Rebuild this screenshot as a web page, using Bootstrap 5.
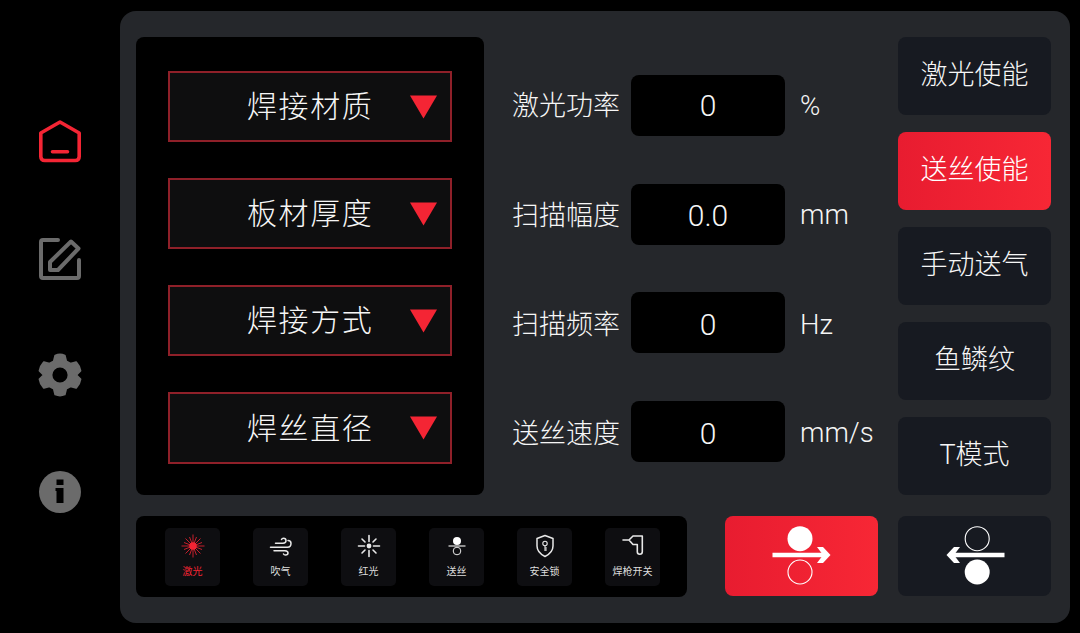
<!DOCTYPE html>
<html lang="zh-CN">
<head>
  <meta charset="UTF-8" />
  <meta name="viewport" content="width=device-width, initial-scale=1.0"/>
  <title>焊接控制面板</title>
  <link href="https://cdn.jsdelivr.net/npm/bootstrap@5.3.3/dist/css/bootstrap.min.css" rel="stylesheet"/>
  <style>
    html, body { height: 100%; }
    body {
      background: #000;
      color: #f6f6f6;
      font-family: Roboto, "Noto Sans CJK SC", sans-serif;
      font-weight: 300;
      overflow: hidden;
    }
    .screen { width: 1080px; height: 633px; padding: 11px 10px 10px 0; }
    .side-rail { width: 120px; padding-top: 109px; gap: 72.7px; }
    .side-rail svg { display: block; width: 44px; height: 44px; }
    .main-panel {
      width: 950px; height: 612px;
      background: #25272b;
      border-radius: 16px;
      padding: 26px 19px 26px 16px;
      gap: 21px;
    }
    .top-area { height: 458px; }
    .select-panel {
      width: 348px;
      background: #000;
      border-radius: 8px;
      padding: 34px 32px 0;
      gap: 36px;
    }
    .select-box {
      height: 71px;
      background: #0e0e0f;
      border: 2px solid #8f2029;
      font-size: 30px;
      letter-spacing: 1.6px;
      padding-left: 77px;
      padding-right: 12px;
    }
    .select-box:last-child { height: 72px; }
    .tri { width: 29px; height: 26px; fill: #f42534; }
    .param-col { width: 360px; margin-left: 28px; padding-top: 38px; gap: 47.5px; }
    .param-label { width: 119px; font-size: 27px; }
    .param-value {
      width: 154px; height: 61px;
      background: #000;
      border-radius: 8px;
      font-size: 30px;
    }
    .param-unit { margin-left: 15px; font-size: 27.5px; white-space: nowrap; }
    .param-col .param-label { margin-top: 2px; }
    .param-col > :nth-child(2) > span { padding-top: 2px; }
    .param-col > :nth-child(3) > span { padding-top: 4px; }
    .param-col > :nth-child(4) > span { padding-top: 4px; }
    .mode-col { width: 153px; margin-left: 26px; gap: 17px; }
    .mode-btn {
      height: 78px;
      background: #171a21;
      border-radius: 8px;
      font-size: 27px;
      padding-bottom: 2px;
    }
    .bottom-area { height: 81px; }
    .status-bar {
      width: 551px;
      background: #000;
      border-radius: 8px;
      padding: 12px 0 0 29px;
      gap: 33px;
    }
    .status-tile {
      width: 55px; height: 58px;
      background: #0e0e11;
      border-radius: 5px;
      font-size: 10px;
      font-weight: 400;
      line-height: 1;
      padding-top: 5px;
      color: #dedede;
    }
    .status-tile svg { width: 26px; height: 26px; margin-bottom: 8px; }
    .status-tile.is-red { color: #f42534; }
    .roll-btn { width: 153px; height: 80px; background: #171a21; border-radius: 8px; }
    .roll-btn svg { width: 64px; height: 64px; }
    .roll-gap { margin-left: 38px; margin-right: 20px; }
    .is-on { background: linear-gradient(90deg, #e81c30, #f72735); color: #fff; }
  </style>
</head>
<body>
  <div class="screen d-flex">
    <div class="side-rail d-flex flex-column align-items-center">
      <svg viewBox="0 0 44 44" fill="none" stroke="#f42534" stroke-width="3.600" stroke-linejoin="round" stroke-linecap="round">
        <path d="M22 2 L41.200 13 V36.500 Q41.200 40.500 37.200 40.500 H6.800 Q2.800 40.500 2.800 36.500 V13 Z"/>
        <path d="M14.500 31.700 H29.500"/>
      </svg>
      <svg viewBox="0 0 44 44" fill="none" stroke="#6b6b6b" stroke-width="4" stroke-linejoin="round" stroke-linecap="round">
        <path d="M20 3 H5 Q3 3 3 5 V39 Q3 41 5 41 H39 Q41 41 41 39 V23"/>
        <path d="M12 33 V25 L33 4.500 L40.500 11.500 L20 33 Z"/>
      </svg>
      <svg viewBox="0 0 44 44">
        <g transform="translate(22 22) scale(.95) translate(-22 -22)">
          <path fill="#6b6b6b" stroke="#6b6b6b" stroke-width="2" stroke-linejoin="round" fill-rule="evenodd" d="M17 1.500 Q22 -.5 27 1.500 L28.500 7.500 L33 10 L39 8.500 Q43 13 43.500 17.500 L39 22 L43.500 26.500 Q43 31 39 35.500 L33 34 L28.500 36.500 L27 42.500 Q22 44.500 17 42.500 L15.500 36.500 L11 34 L5 35.500 Q1 31 .5 26.500 L5 22 L.5 17.500 Q1 13 5 8.500 L11 10 L15.500 7.500 Z M22 13 A9 9 0 1 0 22 31 A9 9 0 1 0 22 13 Z"/>
        </g>
      </svg>
      <svg viewBox="0 0 44 44">
        <circle cx="22" cy="22" r="21" fill="#6b6b6b"/>
        <rect x="18.500" y="9.500" width="7" height="5.500" fill="#000"/>
        <path d="M17.500 18 H25.500 V33 H18.500 V21 H17.500 Z" fill="#000"/>
      </svg>
    </div>

    <div class="main-panel d-flex flex-column">
      <div class="top-area d-flex">
        <div class="select-panel d-flex flex-column">
          <div class="select-box d-flex align-items-center justify-content-between"><span>焊接材质</span><svg class="tri" viewBox="0 0 30 26"><path d="M1 1 H29 L15 25 Z"/></svg></div>
          <div class="select-box d-flex align-items-center justify-content-between"><span>板材厚度</span><svg class="tri" viewBox="0 0 30 26"><path d="M1 1 H29 L15 25 Z"/></svg></div>
          <div class="select-box d-flex align-items-center justify-content-between"><span>焊接方式</span><svg class="tri" viewBox="0 0 30 26"><path d="M1 1 H29 L15 25 Z"/></svg></div>
          <div class="select-box d-flex align-items-center justify-content-between"><span>焊丝直径</span><svg class="tri" viewBox="0 0 30 26"><path d="M1 1 H29 L15 25 Z"/></svg></div>
        </div>

        <div class="param-col d-flex flex-column">
          <div class="d-flex align-items-center"><span class="param-label flex-shrink-0">激光功率</span><span class="param-value flex-shrink-0 d-flex align-items-center justify-content-center">0</span><span class="param-unit">%</span></div>
          <div class="d-flex align-items-center"><span class="param-label flex-shrink-0">扫描幅度</span><span class="param-value flex-shrink-0 d-flex align-items-center justify-content-center">0.0</span><span class="param-unit">mm</span></div>
          <div class="d-flex align-items-center"><span class="param-label flex-shrink-0">扫描频率</span><span class="param-value flex-shrink-0 d-flex align-items-center justify-content-center">0</span><span class="param-unit">Hz</span></div>
          <div class="d-flex align-items-center"><span class="param-label flex-shrink-0">送丝速度</span><span class="param-value flex-shrink-0 d-flex align-items-center justify-content-center">0</span><span class="param-unit">mm/s</span></div>
        </div>

        <div class="mode-col d-flex flex-column">
          <div class="mode-btn d-flex align-items-center justify-content-center">激光使能</div>
          <div class="mode-btn is-on d-flex align-items-center justify-content-center">送丝使能</div>
          <div class="mode-btn d-flex align-items-center justify-content-center">手动送气</div>
          <div class="mode-btn d-flex align-items-center justify-content-center">鱼鳞纹</div>
          <div class="mode-btn d-flex align-items-center justify-content-center">T模式</div>
        </div>
      </div>

      <div class="bottom-area d-flex">
        <div class="status-bar d-flex">
          <div class="status-tile is-red d-flex flex-column align-items-center">
            <svg viewBox="0 0 26 26" stroke="#f42534" stroke-width=".8" fill="#f42534">
              <circle cx="13" cy="13" r="3.800" stroke="none"/>
              <path d="M13 1.500 V24.500 M1.500 13 H24.500 M5.500 5.500 L20.500 20.500 M20.500 5.500 L5.500 20.500 M9.500 4 L16.500 22 M16.500 4 L9.500 22 M4 9.500 L22 16.500 M4 16.500 L22 9.500"/>
            </svg>
            激光
          </div>
          <div class="status-tile d-flex flex-column align-items-center">
            <svg viewBox="0 0 26 26" fill="none" stroke="#e8e8e8" stroke-width="1.500" stroke-linecap="round">
              <path d="M7.500 10.300 H15 Q18 10 18 7.800 Q18 5.300 15.500 5.300 Q14 5.300 13.500 6.500"/>
              <path d="M2.500 14.300 H19.500 Q23 14 23 10.500 Q23 7.500 20 7.500"/>
              <path d="M6 17.700 H17 Q20 18 20 20 Q20 22 17.500 22 Q16 22 15.500 21"/>
            </svg>
            吹气
          </div>
          <div class="status-tile d-flex flex-column align-items-center">
            <svg viewBox="0 0 26 26" fill="none" stroke="#e8e8e8" stroke-width="1.600" stroke-linecap="round">
              <circle cx="13" cy="13" r="2.400" fill="#e8e8e8" stroke="none"/>
              <path d="M13 2.500 V8.500 M13 17.500 V23.500 M2.500 13 H8.500 M17.500 13 H23.500 M6 6 L9 9 M17 17 L20 20 M20 6 L17 9 M9 17 L6 20"/>
            </svg>
            红光
          </div>
          <div class="status-tile d-flex flex-column align-items-center">
            <svg viewBox="0 0 26 26" fill="none" stroke="#e8e8e8">
              <circle cx="13" cy="8" r="4" fill="#fff" stroke="none"/>
              <path d="M4.500 13 H21.500" stroke-width="1.200"/>
              <circle cx="13" cy="18" r="3.800" stroke-width="1"/>
            </svg>
            送丝
          </div>
          <div class="status-tile d-flex flex-column align-items-center">
            <svg viewBox="0 0 26 26" fill="none" stroke="#e8e8e8" stroke-width="1.500" stroke-linejoin="round">
              <path d="M13 2.500 L21 5.500 V13 Q21 19.500 13 23.500 Q5 19.500 5 13 V5.500 Z"/>
              <circle cx="13" cy="10.500" r="2.200" stroke-width="1.100"/>
              <path d="M13 12.700 V18 M13 15 H15 M13 17 H15" stroke-width="1.100"/>
            </svg>
            安全锁
          </div>
          <div class="status-tile d-flex flex-column align-items-center">
            <svg viewBox="0 0 26 26" fill="none" stroke="#e8e8e8" stroke-width="1.600" stroke-linejoin="round" stroke-linecap="round">
              <path d="M3 7 H9 L13 3 H22.300 V18.800 A2.500 2.500 0 0 1 17.300 18.800 V11.500 H13 L9 7"/>
            </svg>
            焊枪开关
          </div>
        </div>
        <div class="roll-btn roll-gap is-on d-flex align-items-center justify-content-center">
          <svg viewBox="0 0 64 64" fill="none" stroke="#fff">
            <circle cx="30" cy="14.700" r="12.500" fill="#fff" stroke="none"/>
            <circle cx="30" cy="48" r="12" stroke-width="1.100"/>
            <path d="M2.500 31 H54" stroke-width="4.500"/>
            <path d="M47 23 H53 L60.500 31 L53 39 H47 L53 31 Z" fill="#fff" stroke="none"/>
          </svg>
        </div>
        <div class="roll-btn d-flex align-items-center justify-content-center">
          <svg viewBox="0 0 64 64" fill="none" stroke="#fff">
            <circle cx="34.200" cy="14.700" r="12" stroke-width="1.100"/>
            <circle cx="34.200" cy="48" r="12.500" fill="#fff" stroke="none"/>
            <path d="M10 31 H61.500" stroke-width="4.500"/>
            <path d="M17 23 H11 L3.500 31 L11 39 H17 L11 31 Z" fill="#fff" stroke="none"/>
          </svg>
        </div>
      </div>
    </div>
  </div>
  <script src="https://cdn.jsdelivr.net/npm/bootstrap@5.3.3/dist/js/bootstrap.bundle.min.js"></script>
</body>
</html>
